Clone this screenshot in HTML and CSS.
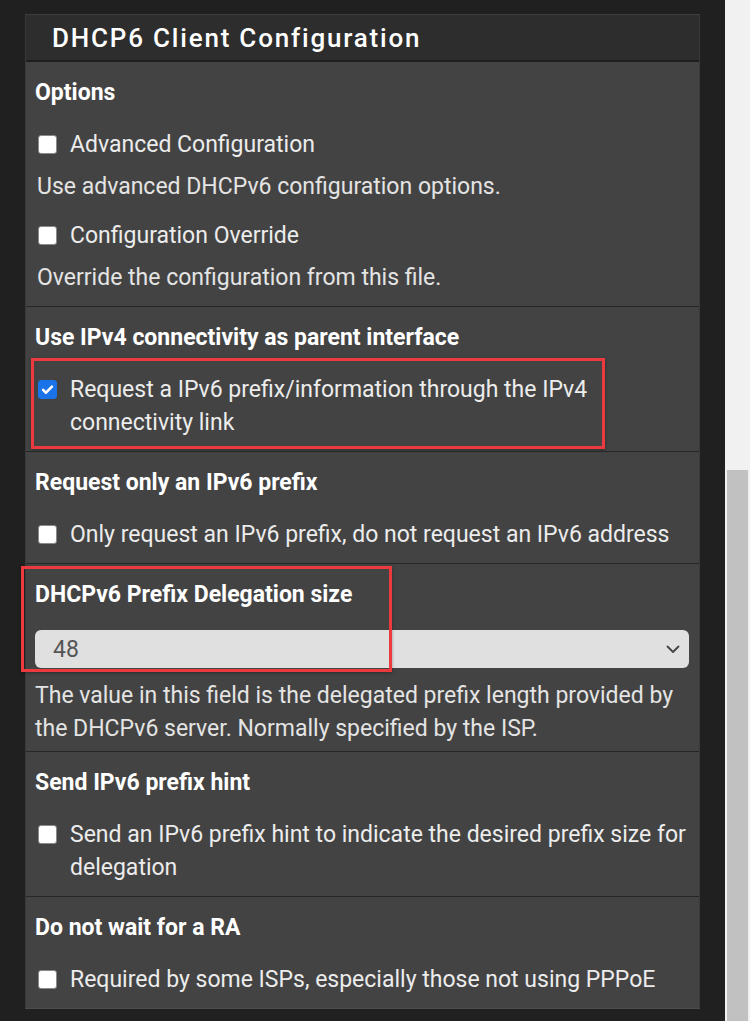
FILE: index.html
```html
<!DOCTYPE html>
<html lang="en">
<head>
<meta charset="utf-8">
<title>DHCP6 Client Configuration</title>
<link rel="stylesheet" href="styles.css">
</head>
<body>
<div class="viewport">
  <main class="main">
    <section class="panel">
      <div class="panel-heading">
        <h2 class="panel-title">DHCP6 Client Configuration</h2>
      </div>
      <div class="panel-body">
        <div class="field">
          <div class="label">Options</div>
          <label class="check"><span class="box"></span><span class="check-text">Advanced Configuration</span></label>
          <div class="help">Use advanced DHCPv6 configuration options.</div>
          <label class="check"><span class="box"></span><span class="check-text">Configuration Override</span></label>
          <div class="help">Override the configuration from this file.</div>
        </div>

        <div class="field">
          <div class="label">Use IPv4 connectivity as parent interface</div>
          <label class="check"><span class="box checked"><svg viewBox="0 0 20 20" width="19" height="19"><path d="M4.8 10.4l3.4 3.4L15.2 6.6" fill="none" stroke="#fff" stroke-width="3" stroke-linecap="round" stroke-linejoin="round"/></svg></span><span class="check-text">Request a IPv6 prefix/information through the IPv4 connectivity link</span></label>
          <div class="mark mark-one"></div>
        </div>

        <div class="field">
          <div class="label">Request only an IPv6 prefix</div>
          <label class="check"><span class="box"></span><span class="check-text">Only request an IPv6 prefix, do not request an IPv6 address</span></label>
        </div>

        <div class="field">
          <div class="label">DHCPv6 Prefix Delegation size</div>
          <div class="select"><span class="select-value">48</span><svg class="chevron" viewBox="0 0 16 16" width="16" height="16"><path d="M2.5 5.5l5.5 5.5 5.5-5.5" fill="none" stroke="#444" stroke-width="1.8" stroke-linecap="round" stroke-linejoin="round"/></svg></div>
          <div class="help help-tail">The value in this field is the delegated prefix length provided by the DHCPv6 server. Normally specified by the ISP.</div>
          <div class="mark mark-two"></div>
        </div>

        <div class="field">
          <div class="label">Send IPv6 prefix hint</div>
          <label class="check"><span class="box"></span><span class="check-text">Send an IPv6 prefix hint to indicate the desired prefix size for delegation</span></label>
        </div>

        <div class="field">
          <div class="label">Do not wait for a RA</div>
          <label class="check"><span class="box"></span><span class="check-text">Required by some ISPs, especially those not using PPPoE</span></label>
        </div>
      </div>
    </section>
  </main>
  <aside class="scrollbar"><div class="thumb"></div></aside>
</div>
</body>
</html>
```

FILE: styles.css
```css
* { box-sizing: border-box; }
html, body { margin: 0; padding: 0; }
body {
  background: #1f1f1f;
  font-family: Roboto, "Noto Sans", "Liberation Sans", sans-serif;
  color: #e6e6e6;
  width: 750px;
  height: 1021px;
  overflow: hidden;
}
.viewport {
  display: flex;
  height: 1021px;
}
.main {
  width: 725px;
  flex: none;
  background: #202020;
  padding: 14px 25px 0 25px;
}
.scrollbar {
  width: 25px;
  flex: none;
  background: #f1f1f1;
  padding: 470px 2px 0 2px;
}
.thumb {
  background: #c1c1c1;
  height: 560px;
}
.panel {
  width: 675px;
  background: #434343;
  border: 1px solid #3a3a3a;
  border-top-color: #3c3c3c;
  border-bottom: 1px solid #4d4d4d;
}
.panel-heading {
  height: 47px;
  background: #2d2d2d;
  border-bottom: 2px solid #1e1e1e;
  padding: 0 0 0 26px;
  display: flex;
  align-items: center;
}
.panel-title {
  margin: 0;
  font-size: 26px;
  font-weight: 500;
  letter-spacing: 1.8px;
  color: #ffffff;
}
.field {
  position: relative;
  padding: 19px 10px 6px 9px;
  border-top: 1px solid #262626;
}
.field:first-child { border-top: none; }
.label {
  font-weight: 700;
  font-size: 23px;
  line-height: 24px;
  color: #ffffff;
  margin-bottom: 23px;
}
.check {
  display: flex;
  align-items: flex-start;
  font-size: 23px;
  line-height: 33px;
  margin-bottom: 6px;
  color: #ececec;
}
.help + .check { margin-top: 16px; }
.box {
  flex: none;
  width: 19px;
  height: 19px;
  margin: 7px 13px 0 3px;
  background: #ffffff;
  border: 1px solid #8a8a8a;
  border-radius: 3px;
  display: flex;
  align-items: center;
  justify-content: center;
}
.box.checked {
  background: #1a73e8;
  border-color: #1a73e8;
}
.box svg { display: block; }
.help {
  font-size: 23px;
  line-height: 33px;
  color: #e4e4e4;
  margin: 9px 0 6px 2px;
}
.help-tail { margin: 11px 0 0 0; }
.select {
  display: flex;
  align-items: center;
  justify-content: space-between;
  height: 38px;
  background: #e0e0e0;
  border-radius: 6px;
  padding: 0 8px 0 18px;
  font-size: 23px;
  color: #555555;
}
.chevron { display: block; }
.mark {
  position: absolute;
  border: 3px solid #ec3a3e;
  box-shadow: 0 1px 3px rgba(0,0,0,0.35);
  pointer-events: none;
}
.mark-one {
  left: 5px;
  top: 51px;
  width: 574px;
  height: 91px;
}
.mark-two {
  left: -5px;
  top: 2px;
  width: 371px;
  height: 106px;
}
```
